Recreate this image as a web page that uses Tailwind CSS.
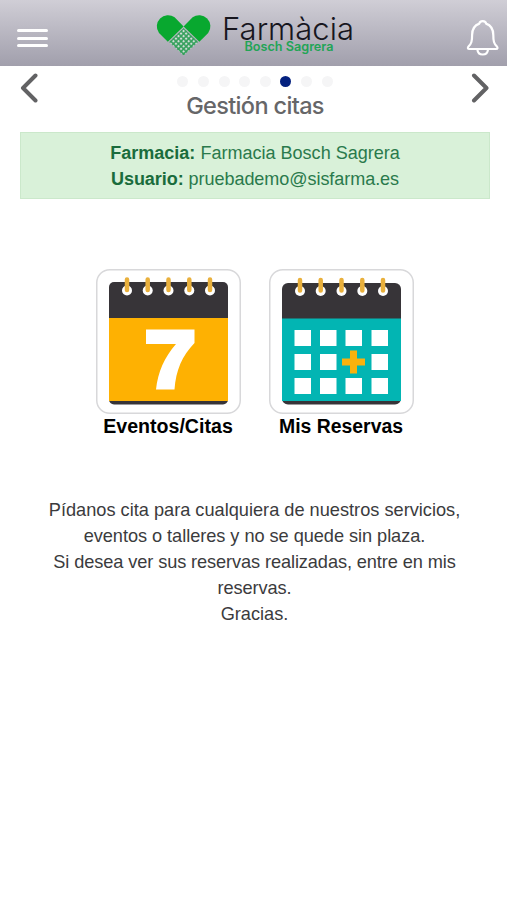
<!DOCTYPE html>
<html lang="es">
<head>
  <meta charset="UTF-8" />
  <title>Gestión citas</title>
  <script src="https://cdn.jsdelivr.net/npm/@tailwindcss/browser@4"></script>
</head>
<body class="bg-white min-h-screen font-['Liberation_Sans',sans-serif]">
  <header class="h-[66px] flex justify-between bg-linear-to-b from-[#d0ced6] to-[#a19fac] pl-[17px] pr-2">
    <button class="w-[31px] pt-[29px] flex flex-col gap-[4.7px]" aria-label="Menú">
      <span class="h-[3px] w-full rounded-sm bg-white"></span>
      <span class="h-[3px] w-full rounded-sm bg-white"></span>
      <span class="h-[3px] w-full rounded-sm bg-white"></span>
    </button>

    <!-- Logo -->
    <svg class="w-[204px] h-[66px] mr-[4px]" viewBox="154 0 204 66">
      <defs>
        <pattern id="puntos" width="3.6" height="3.6" patternUnits="userSpaceOnUse" patternTransform="translate(184.6 28.5) rotate(45)">
          <rect width="3.6" height="3.6" fill="#35a05c" />
          <circle cx="1.8" cy="1.8" r="1.15" fill="#d3ddd8" />
        </pattern>
      </defs>
      <path d="M184.6 26.5 175.6 17.3A11.2 11.2 0 0 0 160 33L168.8 41.8Z" fill="#08a82f" />
      <path d="M184.6 26.5 193.6 17.3A11.2 11.2 0 0 1 209.2 33L200.4 41.8Z" fill="#08a82f" />
      <path d="M184.6 28 199.2 42 184.6 55.4 170 42Z" fill="url(#puntos)" />
      <text x="223" y="39.5" font-family="Inter, sans-serif" font-size="31" font-weight="300" textLength="132" lengthAdjust="spacingAndGlyphs" fill="#17161e">Farmàcia</text>
      <text x="245.5" y="51" font-family="Inter, sans-serif" font-size="12.5" font-weight="600" textLength="89" lengthAdjust="spacingAndGlyphs" fill="#22a456">Bosch Sagrera</text>
    </svg>

    <svg class="w-[33px] h-[38px] mt-[19px]" viewBox="0 0 33 38" fill="none" stroke="#fff" stroke-width="2.2" stroke-linecap="round" stroke-linejoin="round">
      <path d="M13.3 4.6C13.6 1.2 19.8 1.2 20.1 4.6C25.5 6.5 27.3 11 27.3 16C27.300 22.500 28 24.500 30.700 27.300C32 28.700 31.700 30 30 30H3.400C1.700 30 1.400 28.700 2.700 27.300C5.400 24.500 6.100 22.500 6.100 16C6.100 11 7.900 6.500 13.3 4.6ZM11.500 31C12 37 21.400 37 21.900 31" />
    </svg>
  </header>

  <main class="pl-5 pr-[17px] text-center">
    <div class="h-[66px] flex justify-between pt-[7px]">
      <svg class="w-5 h-[30px]" viewBox="0 0 20 30" fill="none" stroke="#626264" stroke-width="4" stroke-linecap="round" stroke-linejoin="round">
        <path d="M15.5 2.5 3 15 15.5 27.5" />
      </svg>
      <div class="flex flex-col items-center">
        <div class="flex gap-[9.6px] pt-[3px]">
          <span class="size-[11px] rounded-full bg-[#f5f5f6]"></span>
          <span class="size-[11px] rounded-full bg-[#f5f5f6]"></span>
          <span class="size-[11px] rounded-full bg-[#f5f5f6]"></span>
          <span class="size-[11px] rounded-full bg-[#f5f5f6]"></span>
          <span class="size-[11px] rounded-full bg-[#f5f5f6]"></span>
          <span class="size-[11px] rounded-full bg-[#04217f]"></span>
          <span class="size-[11px] rounded-full bg-[#f5f5f6]"></span>
          <span class="size-[11px] rounded-full bg-[#f5f5f6]"></span>
        </div>
        <h1 class="mt-1 text-[23.5px] leading-[30px] font-medium text-[#666668] font-[Inter,sans-serif] tracking-[-0.65px]">Gestión citas</h1>
      </div>
      <svg class="w-5 h-[30px]" viewBox="0 0 20 30" fill="none" stroke="#626264" stroke-width="4" stroke-linecap="round" stroke-linejoin="round">
        <path d="M4 2.5 16.5 15 4 27.5" />
      </svg>
    </div>

    <div class="h-[67px] border border-[#cbe8cb] bg-[#d9f1d9] pt-[7px] text-[18.05px] leading-[26px] text-[#2a7a4c]">
      <p><b class="text-[#1a6c3c]">Farmacia:</b> Farmacia Bosch Sagrera</p>
      <p class="tracking-[-0.06px]"><b class="text-[#1a6c3c]">Usuario:</b> pruebademo@sisfarma.es</p>
    </div>

    <!-- Accesos -->
    <div class="mt-[70px] flex justify-center gap-7 pr-px">
      <a class="w-[145px] flex flex-col items-center">
        <svg class="w-[145px] h-[145px]" viewBox="0 0 145 145">
          <rect x=".75" y=".75" width="143.5" height="143.5" rx="13" fill="#fff" stroke="#d8d8da" stroke-width="1.5" />
          <rect x="13" y="13" width="119" height="122.5" rx="5" fill="#373438" />
          <rect x="13" y="49" width="119" height="83" fill="#feb102" />
          <g fill="#fff">
            <circle cx="31" cy="21.5" r="5" />
            <circle cx="51.7" cy="21.5" r="5" />
            <circle cx="72.5" cy="21.5" r="5" />
            <circle cx="93.3" cy="21.5" r="5" />
            <circle cx="114" cy="21.5" r="5" />
          </g>
          <path d="M31 10.5V21M51.7 10.5V21M72.5 10.5V21M93.3 10.5V21M114 10.5V21" stroke="#e9b03c" stroke-width="4.5" stroke-linecap="round" />
          <path d="M50 60.5H98.5V74C86 87 80 101 78.5 120.5H60C62 103 68.5 88 80 75H50Z" fill="#fff" />
        </svg>
        <span class="text-[19.6px] leading-6 font-bold text-black whitespace-nowrap">Eventos/Citas</span>
      </a>
      <a class="w-[145px] flex flex-col items-center">
        <svg class="w-[145px] h-[145px]" viewBox="0 0 145 145">
          <rect x=".75" y=".75" width="143.5" height="143.5" rx="13" fill="#fff" stroke="#d8d8da" stroke-width="1.5" />
          <rect x="13" y="14" width="119" height="121.5" rx="6" fill="#373438" />
          <rect x="13" y="49.5" width="119" height="82.5" fill="#02b5b3" />
          <g fill="#fff">
            <circle cx="31" cy="22" r="5" />
            <circle cx="51.7" cy="22" r="5" />
            <circle cx="72.5" cy="22" r="5" />
            <circle cx="93.3" cy="22" r="5" />
            <circle cx="114" cy="22" r="5" />
            <rect x="25.5" y="61" width="16.5" height="16" />
            <rect x="51" y="61" width="16.5" height="16" />
            <rect x="76.5" y="61" width="16.5" height="16" />
            <rect x="102.5" y="61" width="16.5" height="16" />
            <rect x="25.5" y="85" width="16.5" height="16" />
            <rect x="51" y="85" width="16.5" height="16" />
            <rect x="102.5" y="85" width="16.5" height="16" />
            <rect x="25.5" y="109" width="16.5" height="16" />
            <rect x="51" y="109" width="16.5" height="16" />
            <rect x="76.5" y="109" width="16.5" height="16" />
            <rect x="102.5" y="109" width="16.5" height="16" />
          </g>
          <path d="M31 11V21.5M51.7 11V21.5M72.5 11V21.5M93.3 11V21.5M114 11V21.5" stroke="#e9b03c" stroke-width="4.5" stroke-linecap="round" />
          <path d="M84.5 81.5V104.5M73 93H96" stroke="#f9b20d" stroke-width="7" />
        </svg>
        <span class="text-[19.4px] leading-6 font-bold text-black whitespace-nowrap">Mis Reservas</span>
      </a>
    </div>

    <div class="mt-[60px] pr-px text-[18.2px] leading-[25.9px] text-[#3b3b3d]">
      <p>Pídanos cita para cualquiera de nuestros servicios,<br /><span class="tracking-[-0.05px]">eventos o talleres y no se quede sin plaza.</span></p>
      <p class="tracking-[-0.1px]">Si desea ver sus reservas realizadas, entre en mis<br />reservas.</p>
      <p>Gracias.</p>
    </div>
  </main>
</body>
</html>
